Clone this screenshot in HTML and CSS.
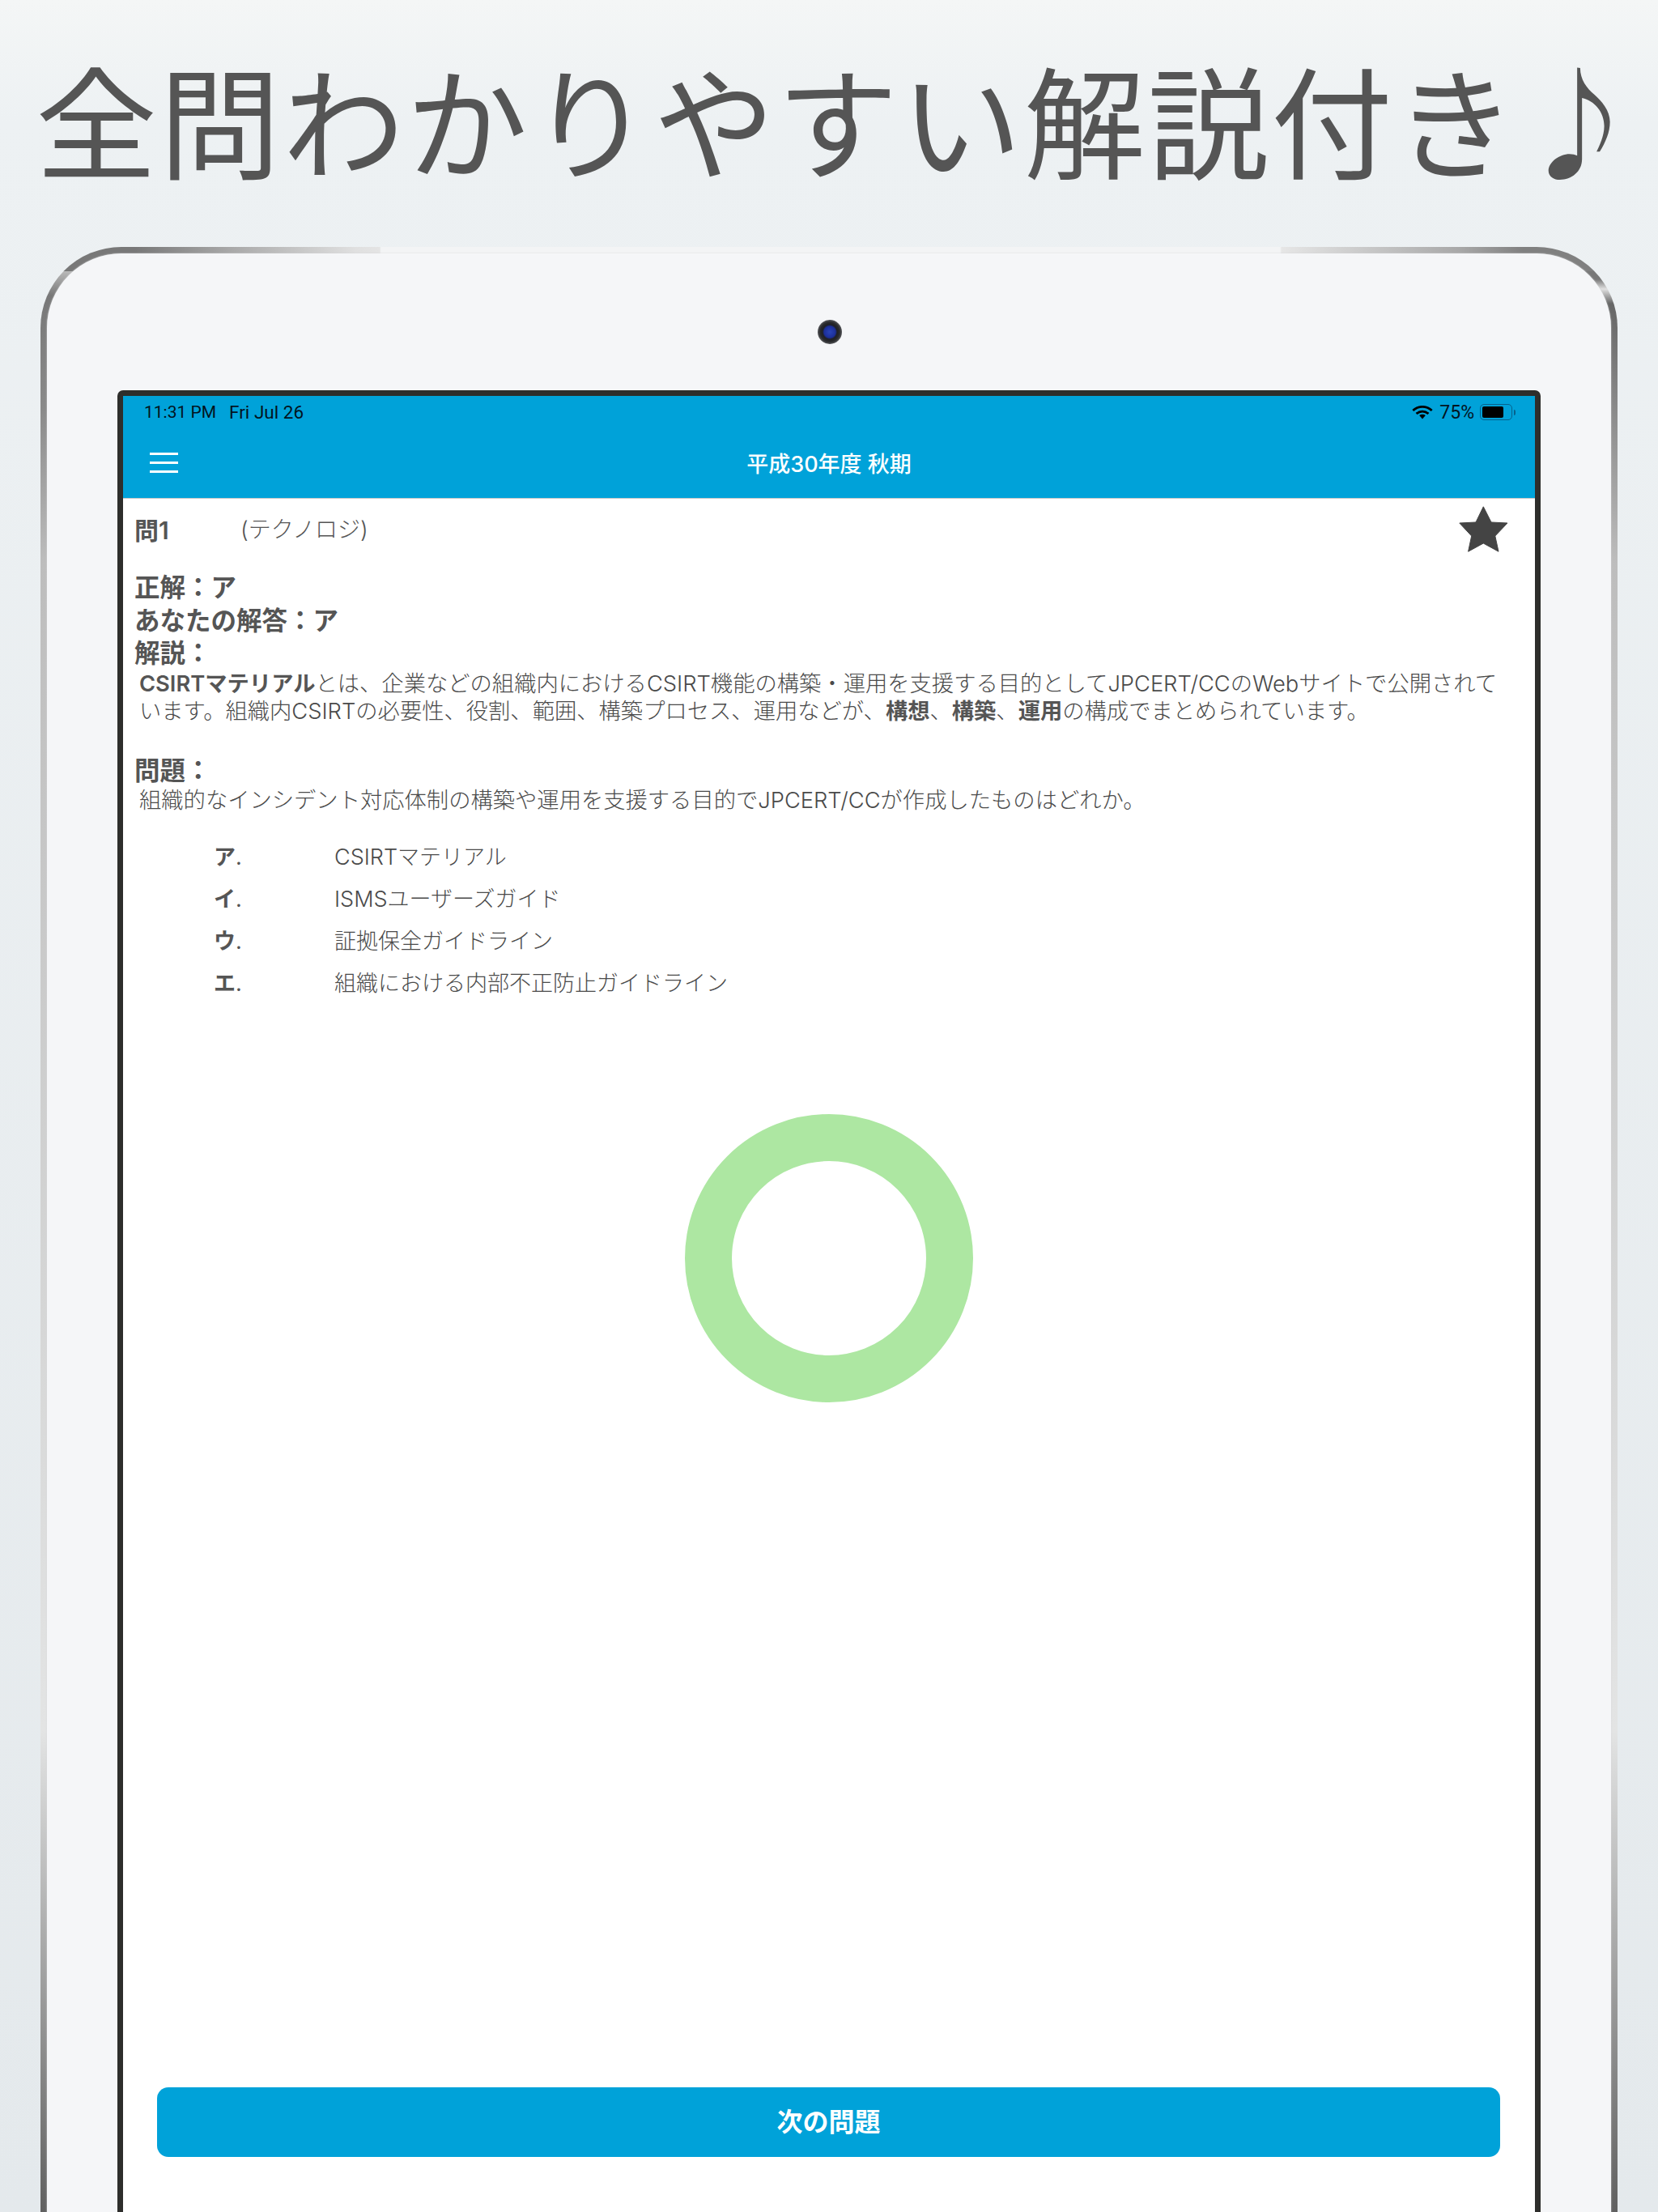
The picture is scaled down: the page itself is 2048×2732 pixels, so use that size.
FILE: index.html
```html
<!DOCTYPE html>
<html lang="ja">
<head>
  <meta charset="UTF-8" />
  <title>全問わかりやすい解説付き</title>
  <link rel="stylesheet" href="styles.css">
</head>
<body>

<h1 class="headline">全問わかりやすい解説付き♪</h1>

<div class="device">
  <div class="device-face">
    <div class="camera"></div>

    <div class="screen">
      <div class="app-header">
        <div class="status-bar">
          <span class="status-time">11:31 PM</span>
          <span class="status-date">Fri Jul 26</span>
          <span class="status-right">
            <svg class="wifi" viewBox="0 0 24 16" width="26" height="17">
              <path d="M1 5.6C7.4-.2 16.6-.2 23 5.6" />
              <path d="M5 9.4C9.2 5.8 14.8 5.8 19 9.4" />
              <path class="wifi-dot" d="M8.4 11.2C10.6 9.8 13.4 9.8 15.6 11.2L12 15.6Z" />
            </svg>
            <span class="status-pct">75%</span>
            <span class="battery"><span class="battery-level"></span></span>
            <span class="battery-nub"></span>
          </span>
        </div>
        <div class="nav-bar">
          <span class="menu-icon"><i></i><i></i><i></i></span>
          <span class="nav-title">平成30年度 秋期</span>
        </div>
      </div>

      <div class="content">
        <div class="q-head">
          <span class="q-num">問1</span>
          <span class="q-category">(テクノロジ)</span>
          <svg class="star" viewBox="0 0 61 57" width="61" height="57">
            <path d="M0.8 21 21 20 30.3 0.8 40 20 60 21 44.8 37 49 56.2 30.3 46 11.6 56.2 15.7 37Z" />
          </svg>
        </div>

        <div class="answers">
          <div class="label">正解：ア</div>
          <div class="label">あなたの解答：ア</div>
          <div class="label">解説：</div>
        </div>
        <p class="body-text"><b>CSIRTマテリアル</b>とは、企業などの組織内におけるCSIRT機能の構築・運用を支援する目的としてJPCERT/CCのWebサイトで公開されています。組織内CSIRTの必要性、役割、範囲、構築プロセス、運用などが、<b>構想</b>、<b>構築</b>、<b>運用</b>の構成でまとめられています。</p>

        <div class="label question-label">問題：</div>
        <p class="body-text">組織的なインシデント対応体制の構築や運用を支援する目的でJPCERT/CCが作成したものはどれか。</p>

        <ul class="choices">
          <li><b>ア</b><span class="dot">.</span><span class="choice-text">CSIRTマテリアル</span></li>
          <li><b>イ</b><span class="dot">.</span><span class="choice-text">ISMSユーザーズガイド</span></li>
          <li><b>ウ</b><span class="dot">.</span><span class="choice-text">証拠保全ガイドライン</span></li>
          <li><b>エ</b><span class="dot">.</span><span class="choice-text">組織における内部不正防止ガイドライン</span></li>
        </ul>
      </div>

      <div class="result-ring"></div>

      <a href="#" class="next-button">次の問題</a>
    </div>
  </div>
</div>

</body>
</html>
```

FILE: styles.css
```css
html, body {
  height: 2732px;
  overflow: hidden;
}

body {
  margin: 0;
  background: linear-gradient(#f4f6f6 0, #edf1f3 150px, #e4e9ec 100%);
  font-family: Inter, 'Noto Sans CJK JP', sans-serif;
  color: #555;
}

.headline {
  margin: 0;
  height: 305px;
  padding-left: 44px;
  line-height: 290px;
  font-family: 'Noto Sans CJK JP', sans-serif;
  font-size: 150px;
  font-weight: 400;
  letter-spacing: 2.6px;
  white-space: nowrap;
  color: #555;
}

/* frame: strips at the top corners, long vertical sheen down the sides */
.device {
  margin: 0 50px;
  padding: 8px 8px 0;
  border-radius: 100px 100px 0 0;
  background:
    linear-gradient(90deg, #787878 6%, #a8a8a8 12%, #e0e0e0 20%, #e4e4e4 21.5%, #f3f4f5 21.6%, #f3f4f5 78.6%, #e6e6e6 78.7%, #a8a8a8 90%, #808080 94%) top / 100% 30px no-repeat,
    linear-gradient(#9a9a9a 0, #e0e0e0 12px, #787878 60px, #8a8a8a 200px, #bdbdbd 390px, #e3e4e4 1833px, #606060 2427px) left top / 50% 100% no-repeat,
    linear-gradient(#787878 0, #787878 40px, #e0e0e0 52px, #666 70px, #8a8a8a 200px, #bdbdbd 390px, #e3e4e4 1833px, #606060 2427px) right top / 50% 100% no-repeat;
}

.device-face {
  position: relative;
  padding: 169px 87px 0;
  border-radius: 92px 92px 0 0;
  background: #f5f6f8;
  box-shadow: 0 0 2px #d4d6d8;
}

.camera {
  position: absolute;
  top: 82px;
  left: 952px;
  width: 30px;
  height: 30px;
  border-radius: 50%;
  background: radial-gradient(circle at 50% 50%, #2a44b8 0, #1c2f9a 7px, #1f2024 9px, #2a2b2e 12px, #55565a 15px);
}

.screen {
  display: flex;
  flex-direction: column;
  box-sizing: border-box;
  height: 2300px;
  border: 7px solid #2e2e2c;
  border-radius: 7px 7px 0 0;
  background: #fff;
}

.app-header {
  height: 126px;
  background: #00a2d9;
  border-bottom: 1px solid #c8c8c8;
}

.status-bar {
  display: flex;
  align-items: center;
  height: 40px;
  padding: 0 24px 0 26px;
  font-family: Roboto, sans-serif;
  font-size: 21px;
  color: #03141f;
}

.status-time {
  margin-right: 16px;
}

.status-date {
  font-size: 22.5px;
}

.status-right {
  display: flex;
  align-items: center;
  margin-left: auto;
}

.status-pct {
  font-size: 23px;
}

.wifi {
  margin-right: 8px;
  fill: none;
  stroke: #000;
  stroke-width: 2.6;
}

.wifi .wifi-dot {
  fill: #000;
  stroke: none;
}

.battery {
  display: block;
  box-sizing: border-box;
  width: 40px;
  height: 20px;
  margin-left: 7px;
  padding: 2px;
  border: 1px solid #06618c;
  border-radius: 5px;
}

.battery-level {
  display: block;
  width: 26px;
  height: 14px;
  border-radius: 2px;
  background: #000;
}

.battery-nub {
  width: 2px;
  height: 7px;
  margin-left: 2px;
  border-radius: 0 2px 2px 0;
  background: #06618c;
}

.nav-bar {
  position: relative;
  display: flex;
  align-items: center;
  justify-content: center;
  height: 85px;
}

.menu-icon {
  position: absolute;
  left: 33px;
  top: 30px;
  display: flex;
  flex-direction: column;
  gap: 8px;
  width: 35px;
}

.menu-icon i {
  display: block;
  height: 3px;
  background: #fff;
}

.nav-title {
  font-size: 27px;
  font-weight: 500;
  color: #fff;
}

.content {
  padding: 0 33px 0 14px;
}

.q-head {
  display: flex;
  align-items: center;
  padding: 9px 0 0;
}

.q-num {
  position: relative;
  top: -1px;
  width: 131px;
  font-size: 30px;
  font-weight: 600;
}

.q-category {
  position: relative;
  top: -2px;
  font-size: 28px;
  font-weight: 300;
}

.star {
  margin-left: auto;
  fill: #444;
  stroke: #444;
  stroke-width: 1;
  stroke-linejoin: round;
}

.answers {
  margin-top: 23px;
}

.label {
  height: 40.5px;
  line-height: 41px;
  font-size: 31.5px;
  font-weight: 600;
}

.question-label {
  margin-top: 35px;
}

.body-text {
  margin: 1px 4px 0 0;
  padding-left: 6px;
  line-height: 34px;
  font-size: 27.3px;
  font-weight: 300;
  color: #4a4a4a;
}

.body-text b {
  font-weight: 600;
  color: #555;
}

.choices {
  margin: 27px 0 0;
  padding: 0 0 0 98px;
  list-style: none;
}

.choices li {
  display: flex;
  height: 52px;
  line-height: 52px;
  font-size: 27px;
}

.choices b {
  font-weight: 600;
}

.choices .dot {
  width: 122px;
  font-weight: 400;
}

.choice-text {
  font-weight: 300;
  color: #4a4a4a;
}

.result-ring {
  box-sizing: border-box;
  width: 356px;
  height: 356px;
  margin: 135px auto 0;
  border: 58px solid #ade7a2;
  border-radius: 50%;
}

.next-button {
  display: block;
  height: 86px;
  margin: auto 43px 111px 42px;
  border-radius: 14px;
  background: #00a2d9;
  line-height: 86px;
  text-align: center;
  text-decoration: none;
  font-size: 32px;
  font-weight: 600;
  color: #fff;
}
```
